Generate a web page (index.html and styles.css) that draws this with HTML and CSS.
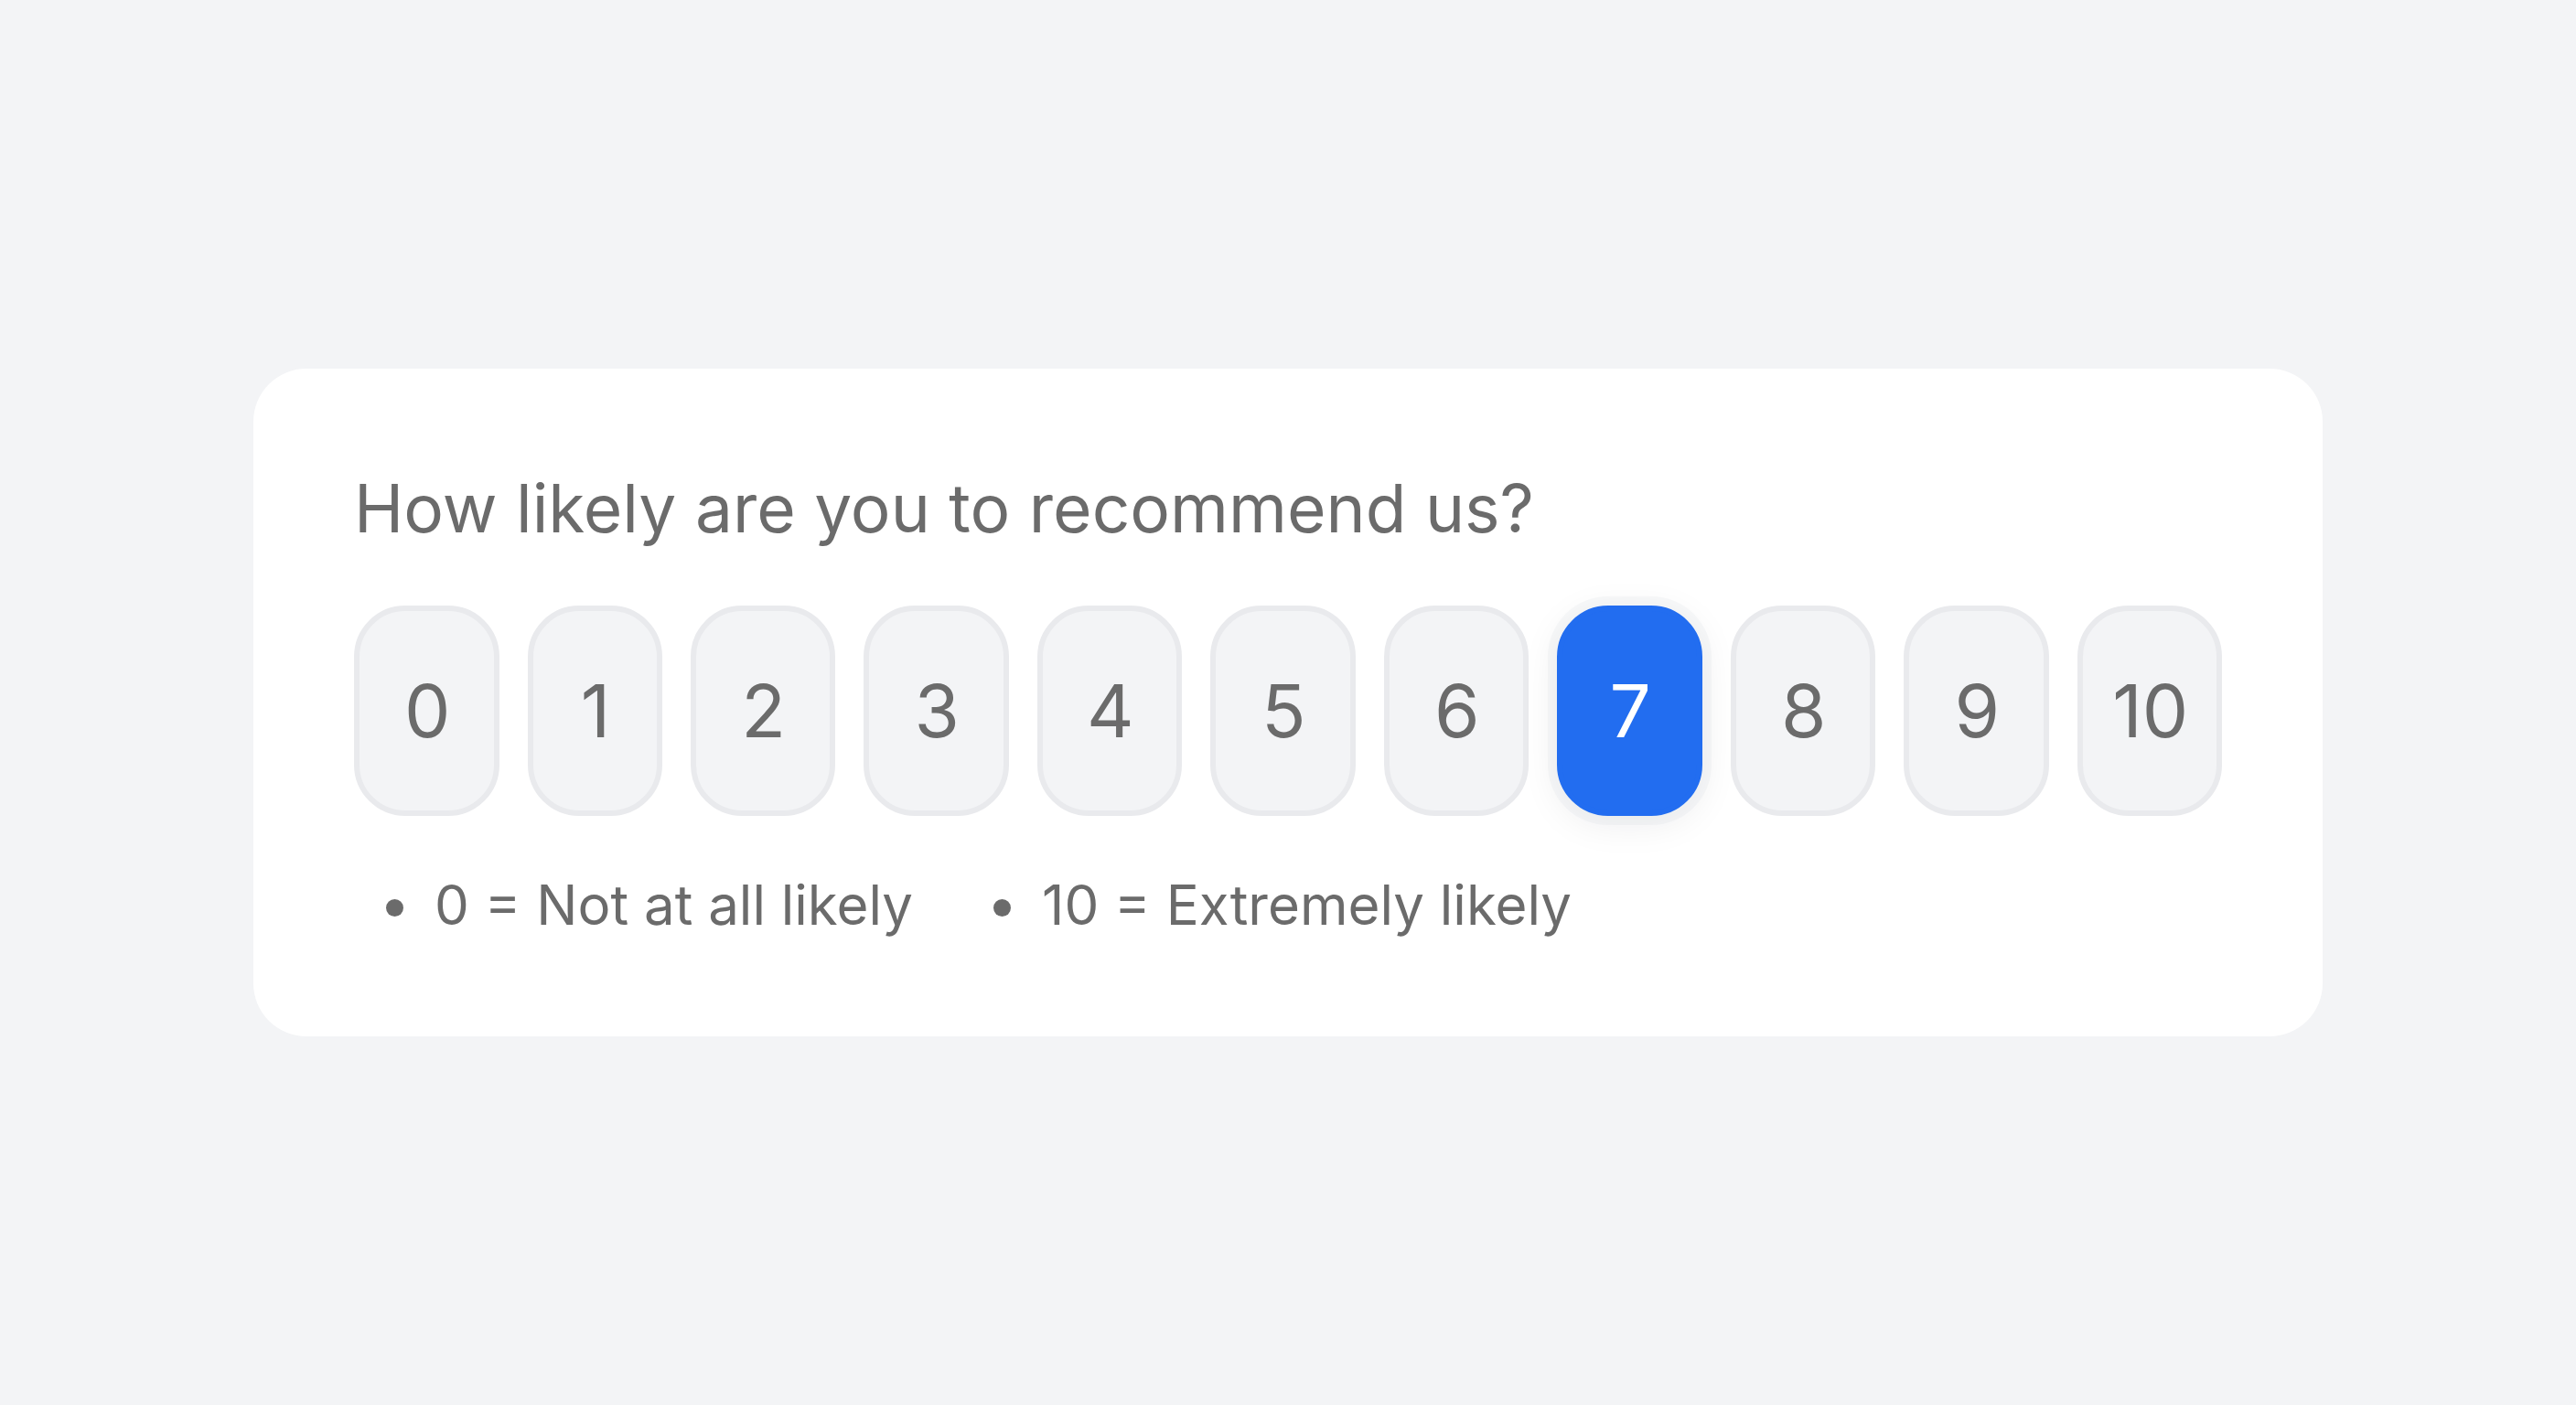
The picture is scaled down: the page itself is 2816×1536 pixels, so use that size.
FILE: index.html
```html
<!DOCTYPE html>
<html lang="en">
<head>
<meta charset="utf-8">
<title>How likely are you to recommend us?</title>
<link rel="stylesheet" href="styles.css">
</head>
<body>
<main class="page">
  <section class="card">
    <h1 class="question">How likely are you to recommend us?</h1>
    <div class="scale">
      <button class="score">0</button>
      <button class="score score-narrow">1</button>
      <button class="score">2</button>
      <button class="score">3</button>
      <button class="score">4</button>
      <button class="score">5</button>
      <button class="score">6</button>
      <button class="score score-active">7</button>
      <button class="score">8</button>
      <button class="score">9</button>
      <button class="score">10</button>
    </div>
    <ul class="legend">
      <li class="legend-item">0 = Not at all likely</li>
      <li class="legend-item">10 = Extremely likely</li>
    </ul>
  </section>
</main>
</body>
</html>
```

FILE: styles.css
```css
* { box-sizing: border-box; }

html, body {
  margin: 0;
  padding: 0;
  background: #f3f4f6;
}

body {
  font-family: Inter, "Noto Sans", "Liberation Sans", sans-serif;
  color: #6b6b6b;
}

.page {
  width: 2816px;
  height: 1536px;
  display: flex;
  align-items: center;
  justify-content: center;
}

.card {
  width: 2262px;
  background: #ffffff;
  border-radius: 58px;
  padding: 109px 110px 108px 110px;
  display: flex;
  flex-direction: column;
}

.question {
  margin: 0;
  font-size: 73px;
  font-weight: 400;
  line-height: 1.2;
  color: #6b6b6b;
  letter-spacing: 0;
}

.scale {
  margin-top: 62px;
  display: flex;
  gap: 31px;
}

.score {
  flex: 1 1 0;
  height: 230px;
  border: 6px solid #e9eaed;
  background: #f3f4f6;
  border-radius: 56px;
  font-family: Inter, "Noto Sans", "Liberation Sans", sans-serif;
  font-size: 80px;
  font-weight: 400;
  color: #6b6b6b;
  padding: 0 0 0 2px;
  display: flex;
  align-items: center;
  justify-content: center;
}

.score-narrow {
  flex: 0 0 147px;
}

.score-active {
  background: #226df0;
  border-color: #226df0;
  color: #ffffff;
  box-shadow: 0 8px 40px rgba(17, 24, 39, 0.08), 0 0 0 10px rgba(243, 244, 246, 0.55);
}

.legend {
  list-style: none;
  margin: 61px 0 0 0;
  padding: 0 0 0 35px;
  display: flex;
  gap: 88px;
  font-size: 60px;
  line-height: 1.2;
}

.legend-item {
  display: flex;
  align-items: center;
}

.legend-item::before {
  content: "";
  width: 19px;
  height: 19px;
  border-radius: 50%;
  background: #6b6b6b;
  margin-right: 34px;
  transform: translateY(4px);
}
```
